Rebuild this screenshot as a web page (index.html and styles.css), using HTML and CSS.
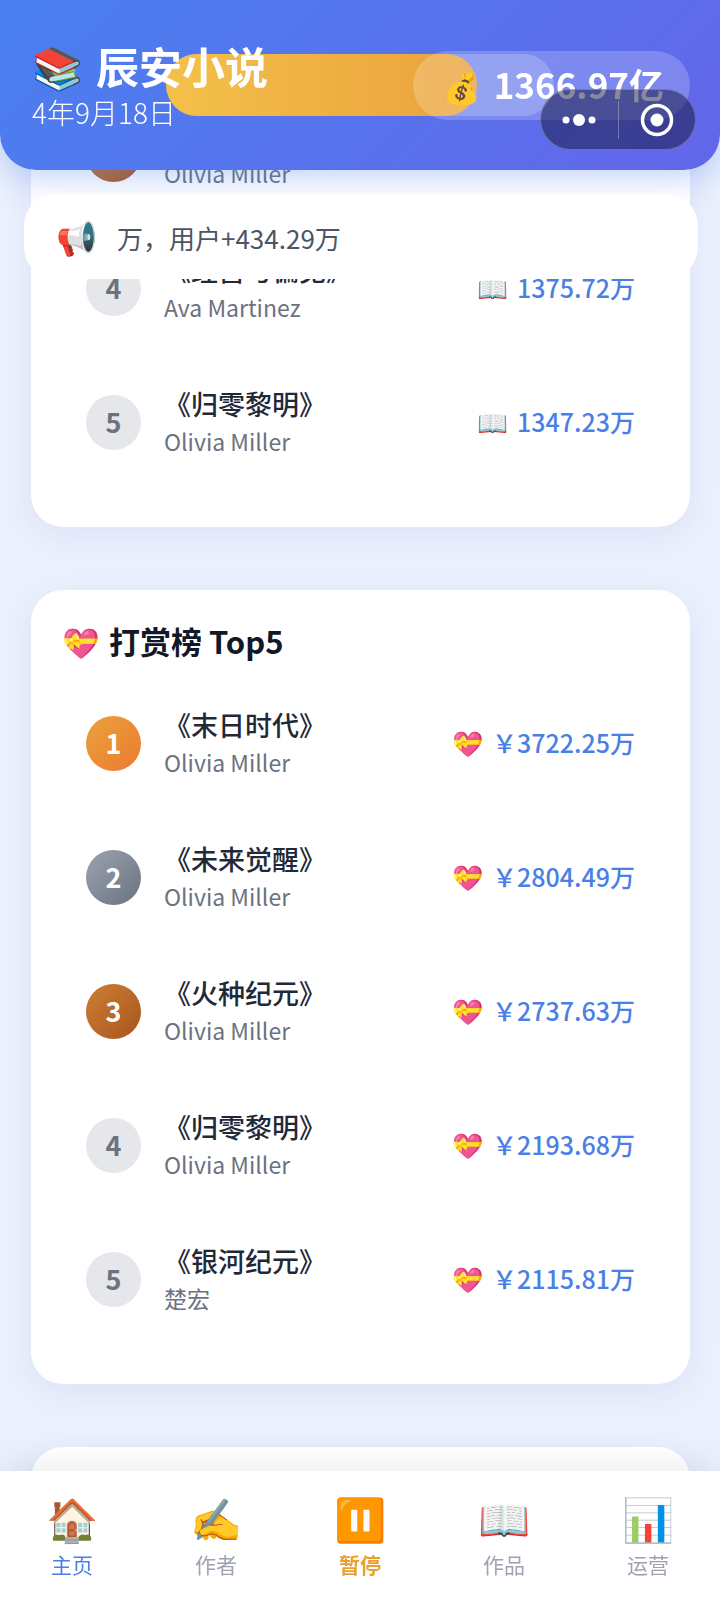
FILE: index.html
```html
<!DOCTYPE html>
<html lang="zh-CN">
<head>
    <meta charset="UTF-8">
    <meta name="viewport" content="width=device-width, initial-scale=1">
    <title>辰安小说</title>
    <link rel="stylesheet" href="styles.css">
</head>
<body>
<header class="header">
    <div class="progress">
        <div class="progress-bar"></div>
    </div>
    <div class="brand">
        <h1><span class="logo">📚</span>辰安小说</h1>
        <p class="date">4年9月18日</p>
    </div>
    <div class="money">
        <span class="money-icon">💰</span>
        <span>1366.97亿</span>
    </div>
    <div class="capsule">
        <button type="button" aria-label="更多">
            <svg width="34" height="14" viewBox="0 0 34 14" fill="#fff">
                <circle cx="4" cy="7" r="3.5"/>
                <circle cx="17" cy="7" r="6"/>
                <circle cx="30" cy="7" r="3.5"/>
            </svg>
        </button>
        <button type="button" aria-label="关闭">
            <svg width="34" height="34" viewBox="0 0 34 34">
                <circle cx="17" cy="17" r="14.5" fill="none" stroke="#fff" stroke-width="3.5"/>
                <circle cx="17" cy="17" r="6.5" fill="#fff"/>
            </svg>
        </button>
    </div>
</header>

<div class="notice">
    <span class="notice-icon">📢</span>
    <p class="notice-text">万，用户+434.29万</p>
</div>

<main class="main">
    <!-- 阅读榜 -->
    <section class="card card-first">
        <ol class="rank-list">
            <li>
                <span class="rank rank3"></span>
                <div class="info">
                    <p class="book"></p>
                    <p class="author">Olivia Miller</p>
                </div>
            </li>
            <li>
                <span class="rank">4</span>
                <div class="info">
                    <p class="book">《经营与偏见》</p>
                    <p class="author">Ava Martinez</p>
                </div>
                <div class="value"><span class="value-icon">📖</span>1375.72万</div>
            </li>
            <li>
                <span class="rank">5</span>
                <div class="info">
                    <p class="book">《归零黎明》</p>
                    <p class="author">Olivia Miller</p>
                </div>
                <div class="value"><span class="value-icon">📖</span>1347.23万</div>
            </li>
        </ol>
    </section>

    <!-- 打赏榜 -->
    <section class="card">
        <h2><span class="card-icon">💝</span>打赏榜 Top5</h2>
        <ol class="rank-list">
            <li>
                <span class="rank rank1">1</span>
                <div class="info">
                    <p class="book">《末日时代》</p>
                    <p class="author">Olivia Miller</p>
                </div>
                <div class="value"><span class="value-icon">💝</span>￥3722.25万</div>
            </li>
            <li>
                <span class="rank rank2">2</span>
                <div class="info">
                    <p class="book">《未来觉醒》</p>
                    <p class="author">Olivia Miller</p>
                </div>
                <div class="value"><span class="value-icon">💝</span>￥2804.49万</div>
            </li>
            <li>
                <span class="rank rank3">3</span>
                <div class="info">
                    <p class="book">《火种纪元》</p>
                    <p class="author">Olivia Miller</p>
                </div>
                <div class="value"><span class="value-icon">💝</span>￥2737.63万</div>
            </li>
            <li>
                <span class="rank">4</span>
                <div class="info">
                    <p class="book">《归零黎明》</p>
                    <p class="author">Olivia Miller</p>
                </div>
                <div class="value"><span class="value-icon">💝</span>￥2193.68万</div>
            </li>
            <li>
                <span class="rank">5</span>
                <div class="info">
                    <p class="book">《银河纪元》</p>
                    <p class="author">楚宏</p>
                </div>
                <div class="value"><span class="value-icon">💝</span>￥2115.81万</div>
            </li>
        </ol>
    </section>

    <section class="card card-next"></section>
</main>

<nav class="tabbar">
    <a href="#home" class="active"><span class="tab-icon">🏠</span>主页</a>
    <a href="#author"><span class="tab-icon">✍️</span>作者</a>
    <a href="#pause" class="pause"><span class="tab-icon">⏸️</span>暂停</a>
    <a href="#works"><span class="tab-icon">📖</span>作品</a>
    <a href="#operate"><span class="tab-icon">📊</span>运营</a>
</nav>
</body>
</html>
```

FILE: styles.css
```css
* {
    box-sizing: border-box;
}

body {
    margin: 0;
    background: #ebf0fd;
    color: #1f2937;
    font-family: "Noto Sans CJK SC", sans-serif;
}

h1, h2, p, ol {
    margin: 0;
    padding: 0;
}

/* 顶部 */
.header {
    position: fixed;
    top: 0;
    left: 0;
    right: 0;
    z-index: 10;
    display: flex;
    justify-content: space-between;
    align-items: flex-start;
    padding: 41px 30px 38px 32px;
    border-radius: 0 0 36px 36px;
    background: linear-gradient(135deg, #4a80f0, #6366e9);
    box-shadow: 0 8px 32px rgba(74, 128, 240, 0.35);
    color: #fff;
}

.brand {
    position: relative;
}

h1 {
    display: flex;
    align-items: center;
    gap: 13px;
    height: 48px;
    margin-bottom: 3px;
    font-size: 43px;
    line-height: 48px;
    font-weight: bold;
}

.logo {
    font-size: 41px;
    font-weight: normal;
}

.date {
    font-size: 28px;
    line-height: 40px;
    font-weight: 300;
}

.progress {
    position: absolute;
    top: 54px;
    left: 23%;
    right: 23%;
    height: 62px;
    border-radius: 31px;
    background: rgba(255, 255, 255, 0.2);
}

.progress-bar {
    width: 80%;
    height: 100%;
    border-radius: 31px;
    background: linear-gradient(90deg, #f4c04a, #eaa23c);
}

.money {
    position: relative;
    display: flex;
    align-items: center;
    gap: 14px;
    height: 69px;
    margin-top: 10px;
    padding: 0 26px 4px 30px;
    border-radius: 35px;
    background: rgba(255, 255, 255, 0.2);
    font-size: 35px;
    line-height: 48px;
    font-weight: bold;
}

.money-icon {
    padding-top: 4px;
    font-size: 30px;
    font-weight: normal;
}

.capsule {
    position: absolute;
    top: 89px;
    right: 24px;
    display: flex;
    align-items: center;
    width: 156px;
    height: 61px;
    border: 1px solid rgba(255, 255, 255, 0.25);
    border-radius: 31px;
    background: rgba(20, 20, 60, 0.5);
}

.capsule button {
    display: flex;
    flex: 1;
    align-items: center;
    justify-content: center;
    height: 38px;
    padding: 0;
    border: 0;
    background: none;
}

.capsule button + button {
    border-left: 1px solid rgba(255, 255, 255, 0.3);
}

/* 公告 */
.notice {
    position: fixed;
    top: 194px;
    left: 24px;
    right: 22px;
    z-index: 11;
    display: flex;
    align-items: center;
    gap: 20px;
    height: 85px;
    padding: 2px 32px 0;
    border-radius: 32px;
    background: #fff;
}

.notice-icon {
    height: 44px;
    font-size: 33px;
    line-height: 40px;
}

.notice-text {
    color: #4b5563;
    font-size: 26px;
    line-height: 40px;
}

/* 榜单 */
.main {
    display: flex;
    flex-direction: column;
    gap: 63px;
    height: 100vh;
    overflow: hidden;
    padding: 87px 30px 0 31px;
}

.card {
    flex-shrink: 0;
    padding: 32px 31px 38px;
    border-radius: 32px;
    background: #fff;
    box-shadow: 0 8px 32px rgba(60, 80, 160, 0.08);
}

.card-first {
    padding-top: 0;
}

.card-next {
    flex: 1;
}

h2 {
    display: flex;
    align-items: center;
    gap: 10px;
    height: 38px;
    margin-bottom: 16px;
    color: #111827;
    font-size: 31px;
    line-height: 38px;
    font-weight: 600;
}

.card-icon {
    font-size: 30px;
}

.rank-list {
    list-style: none;
}

.rank-list li {
    display: flex;
    align-items: center;
    height: 134px;
    padding: 0 24px;
}

.rank {
    width: 55px;
    height: 55px;
    margin-right: 23px;
    border-radius: 50%;
    background: #e5e7eb;
    color: #6b7280;
    font-size: 27px;
    line-height: 53px;
    font-weight: bold;
    text-align: center;
}

.rank1 {
    background: linear-gradient(135deg, #e9a23b, #ec7a32);
    color: #fff;
}

.rank2 {
    background: linear-gradient(135deg, #9ca3af, #6b7280);
    color: #fff;
}

.rank3 {
    background: linear-gradient(135deg, #cd7f32, #a85520);
    color: #fff;
}

.info {
    flex: 1;
    padding-top: 2px;
}

.book {
    height: 36px;
    font-size: 27px;
    line-height: 36px;
    font-weight: 500;
}

.author {
    color: #6b7280;
    font-size: 23px;
    line-height: 38px;
}

.value {
    display: flex;
    align-items: center;
    gap: 9px;
    padding-bottom: 2px;
    color: #4a7fe5;
    font-size: 25px;
    line-height: 38px;
    font-weight: 500;
}

.value-icon {
    font-size: 25px;
}

/* 底部导航 */
.tabbar {
    position: fixed;
    left: 0;
    right: 0;
    bottom: 0;
    z-index: 10;
    display: flex;
    height: 127px;
    padding-top: 18px;
    background: #fff;
    box-shadow: 0 -4px 32px rgba(0, 0, 0, 0.08);
}

.tabbar a {
    display: flex;
    flex: 1;
    flex-direction: column;
    align-items: center;
    gap: 4px;
    color: #9ca3af;
    font-size: 21px;
    line-height: 30px;
    text-decoration: none;
}

.tab-icon {
    height: 56px;
    font-size: 42px;
    line-height: 56px;
}

.tabbar .active {
    color: #4a7fe5;
}

.tabbar .pause {
    color: #eaa030;
    font-weight: bold;
}
```
